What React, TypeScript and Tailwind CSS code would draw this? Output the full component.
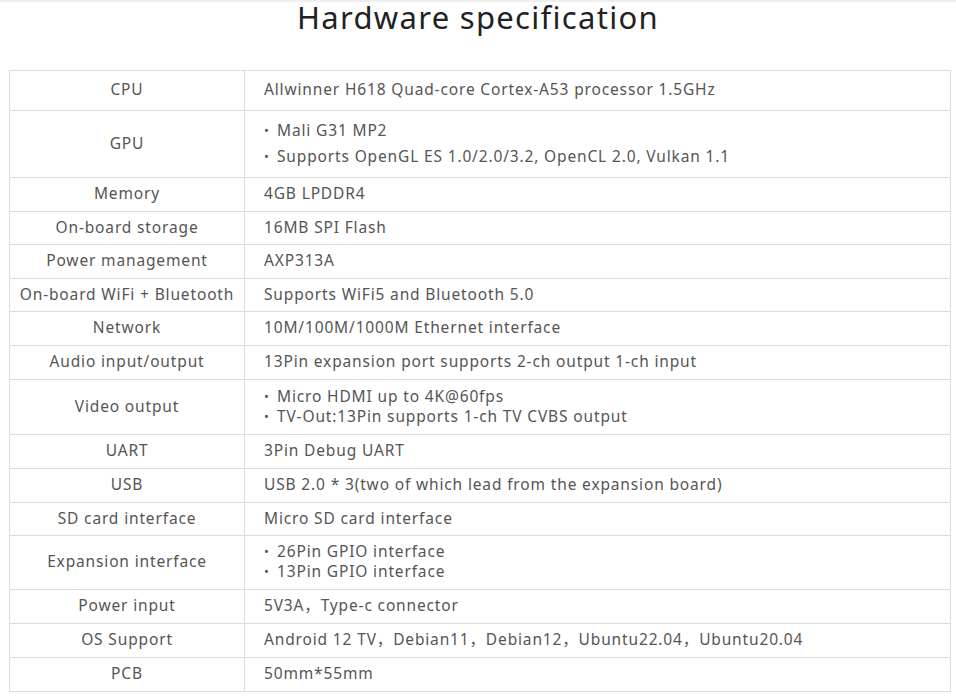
const font = { fontFamily: '"Noto Sans", "Noto Sans CJK SC", sans-serif' };

type Row = { label: string; value: string | string[]; h: string; spaced?: boolean };

const rows: Row[] = [
  { label: "CPU", value: "Allwinner H618 Quad-core Cortex-A53 processor 1.5GHz", h: "h-[40px]" },
  {
    label: "GPU",
    value: ["Mali G31 MP2", "Supports OpenGL ES 1.0/2.0/3.2, OpenCL 2.0, Vulkan 1.1"],
    h: "h-[67px]",
    spaced: true,
  },
  { label: "Memory", value: "4GB LPDDR4", h: "h-[34px]" },
  { label: "On-board storage", value: "16MB SPI Flash", h: "h-[33px]" },
  { label: "Power management", value: "AXP313A", h: "h-[34px]" },
  { label: "On-board WiFi + Bluetooth", value: "Supports WiFi5 and Bluetooth 5.0", h: "h-[33px]" },
  { label: "Network", value: "10M/100M/1000M Ethernet interface", h: "h-[34px]" },
  { label: "Audio input/output", value: "13Pin expansion port supports 2-ch output 1-ch input", h: "h-[34px]" },
  {
    label: "Video output",
    value: ["Micro HDMI up to 4K@60fps", "TV-Out:13Pin supports 1-ch TV CVBS output"],
    h: "h-[55px]",
  },
  { label: "UART", value: "3Pin Debug UART", h: "h-[34px]" },
  { label: "USB", value: "USB 2.0 * 3(two of which lead from the expansion board)", h: "h-[34px]" },
  { label: "SD card interface", value: "Micro SD card interface", h: "h-[33px]" },
  {
    label: "Expansion interface",
    value: ["26Pin GPIO interface", "13Pin GPIO interface"],
    h: "h-[54px]",
  },
  { label: "Power input", value: "5V3A，Type-c connector", h: "h-[34px]" },
  { label: "OS Support", value: "Android 12 TV，Debian11，Debian12，Ubuntu22.04，Ubuntu20.04", h: "h-[34px]" },
  { label: "PCB", value: "50mm*55mm", h: "h-[34px]" },
];

function Value({ row }: { row: Row }) {
  if (typeof row.value === "string") return <span>{row.value}</span>;
  return (
    <div className={row.spaced ? "flex flex-col gap-[6px]" : "flex flex-col"}>
      {row.value.map((line) => (
        <div key={line} className="flex leading-[20px]">
          <span className="w-[13px] text-[13px]">•</span>
          <span>{line}</span>
        </div>
      ))}
    </div>
  );
}

export default function App() {
  return (
    <div className="w-[956px] h-[699px] bg-white border-t-2 border-[#eee] text-[#555]" style={font}>
      <h1 className="text-center text-[31px] leading-[30px] text-[#222] tracking-[1.3px]">
        Hardware specification
      </h1>
      <div className="px-[9px] pt-[38px]">
        <table className="w-[942px] border-collapse border border-[#ddd] text-[15.5px] tracking-[0.85px]">
          <tbody>
            {rows.map((row) => (
              <tr key={row.label} className={row.h}>
                <td className="w-[235px] border border-[#ddd] text-center p-0 pb-[3px] leading-[20px]">
                  {row.label}
                </td>
                <td className="border border-[#ddd] p-0 pl-[19px] pb-[3px] leading-[20px]">
                  <Value row={row} />
                </td>
              </tr>
            ))}
          </tbody>
        </table>
      </div>
    </div>
  );
}
